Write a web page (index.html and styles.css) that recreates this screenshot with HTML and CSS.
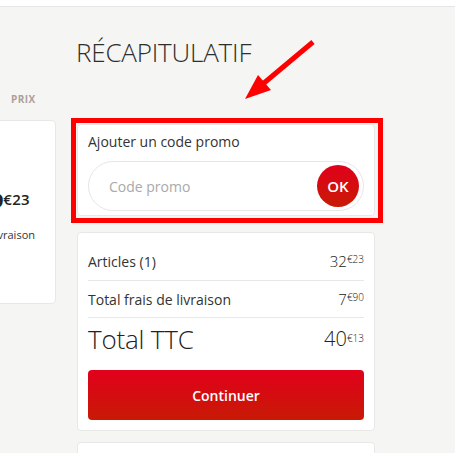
FILE: index.html
```html
<!DOCTYPE html>
<html lang="fr">
<head>
<meta charset="utf-8">
<title>Récapitulatif</title>
<link rel="stylesheet" href="styles.css">
</head>
<body>
<header class="topbar"></header>
<main class="layout">
  <section class="cart-col">
    <div class="col-head">PRIX</div>
    <div class="cart-card">
      <div class="cart-price"><span class="cp-int">29</span><span class="cp-cents">€23</span></div>
      <div class="cart-ship">+ livraison</div>
    </div>
  </section>
  <aside class="summary-col">
    <h1 class="title">RÉCAPITULATIF</h1>
    <div class="promo-card">
      <div class="promo-label">Ajouter un code promo</div>
      <div class="promo-input">
        <span class="placeholder">Code promo</span>
        <button class="ok-btn" type="button">OK</button>
      </div>
      <div class="annot-box"></div>
    </div>
    <div class="totals-card">
      <div class="row row-first">
        <span class="row-label">Articles (1)</span>
        <span class="price"><span class="int">32</span><span class="cents">€23</span></span>
      </div>
      <div class="row row-second">
        <span class="row-label">Total frais de livraison</span>
        <span class="price"><span class="int">7</span><span class="cents">€90</span></span>
      </div>
      <div class="row row-total">
        <span class="total-label">Total TTC</span>
        <span class="price price-big"><span class="int">40</span><span class="cents">€13</span></span>
      </div>
      <button class="continue-btn" type="button">Continuer</button>
    </div>
    <div class="next-card"></div>
  </aside>
  <svg class="annot-arrow" width="80" height="66" viewBox="0 0 80 66" aria-hidden="true">
    <line x1="73" y1="4" x2="24" y2="45" stroke="#ff0000" stroke-width="5"/>
    <polygon points="5,61 18,37 31,52" fill="#ff0000"/>
  </svg>
</main>
</body>
</html>
```

FILE: styles.css
```css
html, body {
  margin: 0;
  padding: 0;
  overflow: hidden;
}
body {
  background: #f5f5f3;
  font-family: "Open Sans", "DejaVu Sans", sans-serif;
  color: #333;
  width: 455px;
  height: 453px;
  position: relative;
}
.topbar {
  height: 6px;
  background: #fff;
  border-bottom: 1px solid #e6e6e4;
}
.layout {
  display: flex;
  align-items: flex-start;
  padding-top: 27px;
}
.cart-col {
  flex: 0 0 56px;
  width: 56px;
  padding-top: 58px;
}
.col-head {
  font-size: 10px;
  line-height: 14px;
  font-weight: 700;
  color: #ad9f9b;
  padding-left: 11px;
  letter-spacing: 0.4px;
}
.cart-card {
  margin-top: 14px;
  margin-left: -120px;
  background: #fff;
  border: 1px solid #e8e8e6;
  border-radius: 4px;
  display: flex;
  flex-direction: column;
  align-items: flex-end;
  padding-top: 68px;
  box-sizing: border-box;
  height: 184px;
}
.cart-price {
  display: flex;
  align-items: flex-start;
  font-weight: 700;
  color: #222;
  padding-right: 25px;
  line-height: 24px;
}
.cp-int {
  font-size: 20px;
}
.cp-cents {
  font-size: 15px;
  line-height: 18px;
  margin-top: 1px;
  font-weight: 600;
  letter-spacing: 0.3px;
}
.cart-ship {
  font-size: 11px;
  line-height: 16px;
  margin-top: 14px;
  padding-right: 20px;
  color: #333;
}
.summary-col {
  flex: 0 0 298px;
  width: 298px;
  margin-left: 21px;
}
.title {
  margin: 0 0 0 -1px;
  font-size: 26px;
  line-height: 36px;
  font-weight: 300;
  color: #2e2e2e;
  letter-spacing: -0.2px;
}
.promo-card {
  position: relative;
  margin-top: 54px;
  background: #fff;
  border: 1px solid #e8e8e6;
  border-radius: 4px;
  padding: 7px 10px 4px 10px;
}
.promo-label {
  font-size: 14px;
  line-height: 20px;
  color: #333;
}
.promo-input {
  margin-top: 9px;
  height: 50px;
  box-sizing: border-box;
  border: 1px solid #e6e6e6;
  border-radius: 25px;
  display: flex;
  align-items: center;
  justify-content: space-between;
  padding: 0 4px 0 20px;
}
.placeholder {
  font-size: 14px;
  color: #a9a9a9;
}
.ok-btn {
  width: 42px;
  height: 42px;
  border-radius: 50%;
  border: none;
  padding: 0;
  background: linear-gradient(180deg, #e1001b 0%, #c81a05 100%);
  color: #fff;
  font-family: "Open Sans", sans-serif;
  font-weight: 600;
  font-size: 15px;
}
.annot-box {
  position: absolute;
  top: -7px;
  left: -7px;
  right: -9px;
  bottom: -8px;
  border: 5px solid #ff0000;
  pointer-events: none;
}
.totals-card {
  margin-top: 16px;
  background: #fff;
  border: 1px solid #e8e8e6;
  border-radius: 4px;
  padding: 10px 10px 10px 10px;
}
.row {
  display: flex;
  align-items: center;
  justify-content: space-between;
  border-bottom: 1px solid #e8e8e6;
}
.row-first {
  height: 37px;
}
.row-second {
  height: 36px;
}
.row-total {
  height: 42px;
  border-bottom: none;
}
.row-label {
  font-size: 14px;
  color: #333;
}
.total-label {
  font-size: 26px;
  font-weight: 300;
  color: #222;
  letter-spacing: -0.2px;
}
.price {
  display: inline-flex;
  align-items: flex-start;
  font-family: "Open Sans", sans-serif;
  font-weight: 300;
  color: #222;
  line-height: 1;
}
.price .int {
  font-size: 15px;
}
.price .cents {
  font-size: 10px;
  margin-top: 0;
}
.price-big .int {
  font-size: 20px;
}
.price-big .cents {
  font-size: 10px;
  margin-top: 4px;
}
.continue-btn {
  display: block;
  width: 100%;
  margin-top: 10px;
  height: 50px;
  border: none;
  border-radius: 4px;
  background: linear-gradient(180deg, #e1001b 0%, #c81a05 100%);
  color: #fff;
  font-family: "Open Sans", sans-serif;
  font-weight: 600;
  font-size: 14px;
}
.next-card {
  margin-top: 11px;
  height: 40px;
  background: #fff;
  border: 1px solid #e8e8e6;
  border-radius: 4px;
}
.annot-arrow {
  position: absolute;
  left: 240px;
  top: 38px;
  pointer-events: none;
}
```
